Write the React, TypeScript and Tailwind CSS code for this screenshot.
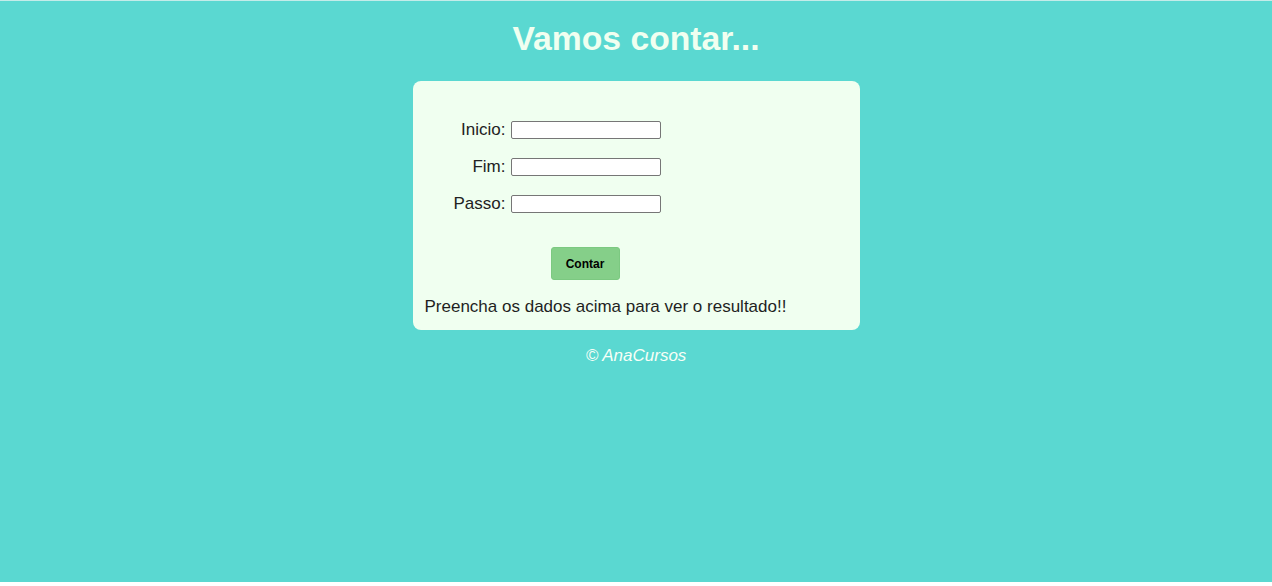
export default function App() {
  return (
    <div className="h-[586px] bg-white font-['Liberation_Sans',Arial,sans-serif]">
      <main className="h-[582px] bg-[#5ad8d1] border-t border-[#c4ece9] flex flex-col items-center">
        <h1 className="mt-[19px] text-[33.7px] leading-[37px] font-bold text-[#f0fff0]">Vamos contar...</h1>

        <div className="mt-[24px] w-[447px] bg-[#f0fff0] rounded-lg px-3 pt-[40px] pb-[13px]">
          <div className="grid grid-cols-[81px_150px] gap-x-[5px] gap-y-[19px] items-center">
            <Field label="Inicio:" />
            <Field label="Fim:" />
            <Field label="Passo:" />
          </div>

          <div className="mt-[34px] pl-[126px]">
            <button className="w-[69px] h-[33px] rounded-[3px] bg-[#85cf89] border border-[#7cc981] text-[12px] font-bold text-black">
              Contar
            </button>
          </div>

          <p className="mt-[16px] text-[17px] leading-[21px] text-[#1f1f1f]">
            Preencha os dados acima para ver o resultado!!
          </p>
        </div>

        <p className="mt-[16px] text-[17px] leading-[20px] italic text-[#f7fff7]">© AnaCursos</p>
      </main>
    </div>
  );
}

function Field({ label }: { label: string }) {
  return (
    <>
      <label className="text-right text-[17px] leading-[18px] text-[#222]">{label}</label>
      <input
        type="text"
        className="h-[18px] w-[150px] bg-white border border-[#767676] rounded-[2px] text-[13px] px-1"
      />
    </>
  );
}
